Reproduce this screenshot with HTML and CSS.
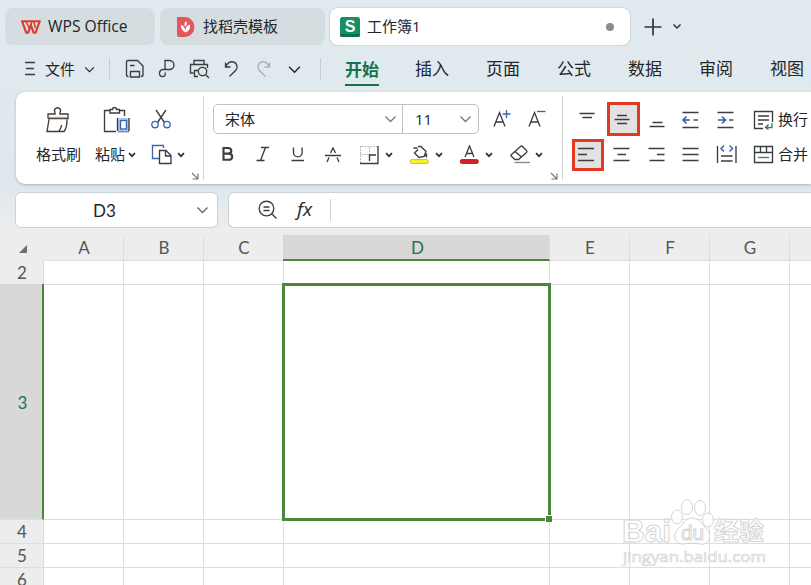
FILE: index.html
```html
<!DOCTYPE html>
<html lang="zh-CN">
<head>
<meta charset="utf-8">
<title>工作簿1</title>
<link rel="stylesheet" href="styles.css">
</head>
<body>
<svg width="0" height="0" class="defs">
  <symbol id="caret" viewBox="0 0 8 6"><path d="M1 1.2 4 4.2 7 1.2" fill="none" stroke="#303030" stroke-width="1.7"/></symbol>
  <symbol id="chev" viewBox="0 0 12 8"><path d="M1 1.5 6 6.5 11 1.5" fill="none" stroke="currentColor" stroke-width="1.3"/></symbol>
  <symbol id="launch" viewBox="0 0 8 8"><path d="M1 1 6.5 6.500M7 1.500V7H1.500" fill="none" stroke="#777" stroke-width="1.200"/></symbol>
</svg>

<header class="tabs">
  <div class="tab home">
    <svg width="20" height="14" viewBox="0 0 20 14"><path d="M1 1.200H18.800L14.600 12.600H12.600L9.800 4.800 7.200 12.600H5.200Z" fill="none" stroke="#dc3b2c" stroke-width="2.100" stroke-linejoin="round"/><path d="M5.200 1.500 8.300 8.500M9.800 4.800 11 1.500M12.700 1.500 14.500 8" stroke="#dc3b2c" stroke-width="1.500"/></svg>
    <span>WPS Office</span>
  </div>
  <div class="tab docer">
    <svg width="19" height="20" viewBox="0 0 19 20"><path d="M1 0H9A9.500 10 0 0 1 9 20H3Q1 20 1 18Z" fill="#e2575b"/><path d="M9.500 15.500C6 13.500 5 11 4.800 8 7.500 8.500 9 10.500 9.500 15.500M9.500 15.500C9 12 10 9 14 7.500 14.500 11.500 13 14 9.500 15.500M9 9.500C8 7.500 8.500 5.500 10 4 11 5.500 11.200 7 10.500 8.500Z" fill="#fff"/></svg>
    <span>找稻壳模板</span>
  </div>
  <div class="tab active">
    <svg width="20" height="20" viewBox="0 0 20 20"><rect width="20" height="20" rx="2.500" fill="#159063"/><path d="M0 17H20V18a2 2 0 0 1-2 2H2a2 2 0 0 1-2-2Z" fill="#0b704b"/></svg>
    <b class="s">S</b>
    <span>工作簿1</span>
    <i class="dot"></i>
  </div>
  <svg class="plus" width="18" height="18" viewBox="0 0 18 18"><path d="M9 .5V17.500M.5 9H17.500" stroke="#303438" stroke-width="1.700"/></svg>
  <svg class="more" width="10" height="7" viewBox="0 0 10 7"><path d="M1.500 1.500 5 5 8.500 1.500" fill="none" stroke="#303438" stroke-width="1.500"/></svg>
</header>

<nav class="menu">
  <svg width="12" height="16" viewBox="0 0 12 16" class="ln up"><path d="M1 1.500H11M2 7.500H10M1 13.500H11"/></svg>
  <span class="file">文件</span>
  <svg width="11" height="7"><use href="#chev"/></svg>
  <i class="bar"></i>
  <svg width="20" height="20" viewBox="0 0 20 20" class="ln"><path d="M3.500 17.500H3Q1.500 17.500 1.500 16V3Q1.500 1.500 3 1.500H12.500L18 7V16Q18 17.500 16 17.500M5.500 18V12.500H14.500V18ZM5 6.500H9.500"/></svg>
  <svg width="18" height="20" viewBox="0 0 18 20" class="ln"><path d="M7 10.500V1.500H11.500A4.500 4.500 0 0 1 11.500 10.500H5Q1.500 11 1.500 14.300T4.500 17.500 7.300 14.500V13.500"/></svg>
  <svg width="21" height="20" viewBox="0 0 21 20" class="ln"><path d="M5 5V1.500H15V5M4.500 14H1.500V5.500H18.500V9M9 17.500H5.500V11.500H9M16.500 15.500 20 19"/><circle cx="13.500" cy="12.500" r="4.200"/></svg>
  <svg width="15" height="18" viewBox="0 0 15 18" class="ln"><path d="M1.500 2.500V7H6.500M1.500 7C3.500 2.800 6.500 1.200 9.500 2 13 3 14 7 12 10L5.500 16.500"/></svg>
  <svg width="15" height="18" viewBox="0 0 15 18" class="ln pale"><path d="M13.500 2.500V7H8.500M13.500 7C11.500 2.800 8.500 1.200 5.500 2 2 3 1 7 3 10L9.500 16.500"/></svg>
  <svg width="13" height="9"><use href="#chev"/></svg>
  <i class="bar"></i>
  <b class="on">开始</b><span>插入</span><span>页面</span><span>公式</span><span>数据</span><span>审阅</span><span>视图</span>
</nav>

<section class="ribbon">
  <div class="group clip">
    <div class="big">
      <svg width="26" height="28" viewBox="0 0 26 28" class="ln"><path d="M3 12.500V8H10V6.500A3 3 0 1 1 15 6.500V8H23V12.500H3M4 13.500 2 25.500H19Q22 22 22 13.500M16.500 19Q16.500 22 14 25"/><path d="M4 11.500H22" stroke="#e49a5b"/></svg>
      <span>格式刷</span>
    </div>
    <div class="big paste">
      <svg width="28" height="28" viewBox="0 0 28 28" class="ln"><path d="M7 4.500H1.500V25.500H13M16 4.500H21.500V10M7 7V3.500H9.500Q9.500 1.500 11.500 1.500T13.500 3.500H16.500V7ZM15 25.500H26"/><rect x="14.500" y="12" width="11.500" height="13.500" fill="#b5cdf2" stroke="none"/><path d="M14.500 12V25M26 12V25"/><rect x="17.500" y="14.500" width="6" height="8.500" fill="#fff" stroke="#3864b4"/></svg>
      <span>粘贴 <svg width="8" height="6"><use href="#caret"/></svg></span>
    </div>
    <div class="small">
      <svg width="22" height="20" viewBox="0 0 22 20" class="ln"><path d="M6 1 14.500 13.500M16 1 7.500 13.500"/><circle cx="5" cy="15.500" r="3.200" stroke="#3c68ad"/><circle cx="17" cy="15.500" r="3.200" stroke="#3c68ad"/></svg>
      <div class="pair"><svg width="22" height="21" viewBox="0 0 22 21" class="ln"><path d="M8 14.500H1.500V1.500H12.500V4" stroke="#3c68ad"/><path d="M8.500 6.500H15L20 11.500V19.500H8.500ZM14.500 6.500V12H20" fill="#fff"/></svg><svg width="8" height="6"><use href="#caret"/></svg></div>
    </div>
    <svg class="corner" width="8" height="8"><use href="#launch"/></svg>
  </div>

  <div class="group font">
    <div class="row1">
      <div class="combo"><span class="name">宋体<svg width="13" height="8"><use href="#chev"/></svg></span><span class="size">11<svg width="13" height="8"><use href="#chev"/></svg></span></div>
      <svg width="20" height="20" viewBox="0 0 20 20" class="ln"><path d="M1 17.500 6.500 3.500 12 17.500M3 13H10"/><path d="M9.500 5H17.500M13.500 1V9" stroke="#3864a8"/></svg>
      <svg width="20" height="20" viewBox="0 0 20 20" class="ln"><path d="M1 17.500 6.500 3.500 12 17.500M3 13H10"/><path d="M9 2.500H17.500" stroke="#3864a8"/></svg>
    </div>
    <div class="row2">
      <svg width="14" height="16" viewBox="0 0 14 16" class="ln bold"><path d="M2.500 1H7Q10.300 1 10.300 3.800T7 6.600H2.500ZM2.500 6.600H7.500Q11.200 6.600 11.200 9.700T7.500 12.800H2.500Z"/></svg>
      <svg width="15" height="16" viewBox="0 0 15 16" class="ln"><path d="M5 .5H13M.5 13.500H8.500M9.500 .5 4.500 13.500"/></svg>
      <svg width="14" height="16" viewBox="0 0 14 16" class="ln"><path d="M2.500 .5V5.500A4.300 4.300 0 0 0 11.100 5.500V.5M.5 13.500H13"/></svg>
      <svg width="18" height="17" viewBox="0 0 18 17" class="ln"><path d="M5.500 6 8 1 10.500 6M0 8.500H16M4 10.500 2 15M12 10.500 14 15"/></svg>
      <svg width="20" height="20" viewBox="0 0 20 20" class="ln"><path d="M1 1.500H18M.5 1V18M9.500 2V9M1 9.500H9" stroke="#bbb" stroke-width="1" stroke-dasharray="2 1"/><path d="M18 1V18.500H0M9.500 16V10H16"/></svg>
      <svg width="8" height="6"><use href="#caret"/></svg>
      <svg width="20" height="21" viewBox="0 0 20 21" class="ln"><path d="M3.500 3H7.500M8 1.500H11L16 6.500 14 11.500 9 12.500 4.500 8 8 4.500 5 7.500M14 11.500 16.500 9.500V12.500"/><rect x=".3" y="14.500" width="18" height="4" rx="1.500" fill="#f5f328" stroke="#bcb835" stroke-width=".8"/></svg>
      <svg width="8" height="6"><use href="#caret"/></svg>
      <svg width="20" height="21" viewBox="0 0 20 21" class="ln"><path d="M5 12 9.500 1 14 12M6.500 8.500H12.500"/><rect x=".3" y="14.500" width="18" height="4" rx="1.500" fill="#d51f28" stroke="#ae1821" stroke-width=".8"/></svg>
      <svg width="8" height="6"><use href="#caret"/></svg>
      <svg width="21" height="20" viewBox="0 0 21 20" class="ln"><path d="M1 10 10.500 1.500Q11.500 .5 12.500 1.500L16.500 5.500Q17.500 6.500 16.500 7.500L8.500 14.500H5L1 11ZM5 6.500 11.500 12"/><path d="M4.500 17.500H20" stroke="#888"/></svg>
      <svg width="8" height="6"><use href="#caret"/></svg>
    </div>
    <svg class="corner" width="8" height="8"><use href="#launch"/></svg>
  </div>

  <div class="group align">
    <svg width="32" height="32" viewBox="0 0 32 32" class="ln"><path d="M8.500 9.500H23.500M11.500 13.500H21"/></svg>
    <span class="hot tall"><svg width="26" height="26" viewBox="0 0 26 26" class="ln"><path d="M7 10.500H17M4.500 14.500H19.500M7 18.500H17"/></svg></span>
    <svg width="32" height="32" viewBox="0 0 32 32" class="ln"><path d="M11.500 18.500H21.500M8.500 22.500H23.500"/></svg>
    <svg width="32" height="32" viewBox="0 0 32 32" class="ln"><path d="M7.500 8.500H23.500M7.500 23.500H23.500"/><path d="M8 16H15M11.500 12.500 8 16 11.500 19.500" stroke="#3456b4" stroke-width="1.500"/><path d="M18.500 16H23"/></svg>
    <svg width="32" height="32" viewBox="0 0 32 32" class="ln"><path d="M7.500 8.500H23.500M7.500 23.500H23.500"/><path d="M8 16H15.500M12 12.500 15.500 16 12 19.500" stroke="#3456b4" stroke-width="1.500"/><path d="M19 16H23.500"/></svg>
    <div class="labeled"><svg width="21" height="20" viewBox="0 0 21 20" class="ln"><path d="M10 18.500H1.500V1.500H19.500V12M5 6H16M5 10H16M5 14H10"/><path d="M19 13V17.500H13M15.500 14.500 12.500 17.500 15.500 19.500" stroke="#36835b"/></svg><span>换行</span></div>

    <span class="hot"><svg width="25" height="26" viewBox="0 0 25 26" class="ln"><path d="M3 6.500H19M3 12.500H12M3 18.500H19"/></svg></span>
    <svg width="32" height="32" viewBox="0 0 32 32" class="ln"><path d="M7.500 9.500H23.500M11.500 15.500H20M7.500 21.500H23.500"/></svg>
    <svg width="32" height="32" viewBox="0 0 32 32" class="ln"><path d="M7.500 9.500H23.500M16 15.500H23.500M8.500 21.500H23.500"/></svg>
    <svg width="32" height="32" viewBox="0 0 32 32" class="ln"><path d="M7.500 9.500H23.500M7.500 15.500H23.500M7.500 21.500H23.500"/></svg>
    <svg width="32" height="32" viewBox="0 0 32 32" class="ln"><path d="M7.500 7V24M26 7V24M11 17H22.500M11 22H22.500"/><path d="M14 6.500 11 9.500 14 12.500M19.500 6.500 22.500 9.500 19.500 12.500" stroke="#3456b4" stroke-width="1.400"/></svg>
    <div class="labeled"><svg width="21" height="20" viewBox="0 0 21 20" class="ln"><path d="M1.500 1.500H19.500V17.500H1.500ZM1.500 7.500H19.500M7.500 1.500V7.500M13.500 1.500V7.500"/><path d="M5 12.500H16" stroke="#36835b"/></svg><span>合并</span></div>
  </div>
</section>

<section class="formula">
  <div class="namebox"><span>D3</span><svg width="13" height="8"><use href="#chev"/></svg></div>
  <div class="input">
    <svg width="20" height="20" viewBox="0 0 20 20" class="ln"><circle cx="8.500" cy="8.500" r="7.300"/><path d="M13.500 13.500 18.500 18.500M5.500 7H11.500M5.500 10.500H11.500"/></svg>
    <span class="fx">fx</span>
    <i class="bar"></i>
  </div>
</section>

<main class="sheet">
  <div class="corner-cell"><svg width="8" height="8"><path d="M8 0V8H0Z" fill="#6f6f6f"/></svg></div>
  <div class="ch">A</div><div class="ch">B</div><div class="ch">C</div><div class="ch sel">D</div><div class="ch">E</div><div class="ch">F</div><div class="ch">G</div><div class="ch"></div>
  <div class="rh">2</div><i></i><i></i><i></i><i></i><i></i><i></i><i></i><i></i>
  <div class="rh sel">3</div><i></i><i></i><i></i><i class="cur"></i><i></i><i></i><i></i><i></i>
  <div class="rh">4</div><i></i><i></i><i></i><i></i><i></i><i></i><i></i><i></i>
  <div class="rh">5</div><i></i><i></i><i></i><i></i><i></i><i></i><i></i><i></i>
  <div class="rh">6</div><i></i><i></i><i></i><i></i><i></i><i></i><i></i><i></i>
  <svg class="mark" width="152" height="74" viewBox="0 0 152 74">
    <g fill="#fff" stroke="#cfcfcf" stroke-width="1">
      <text x="2" y="44" font-size="31" textLength="49" lengthAdjust="spacingAndGlyphs" font-weight="700" font-family="Liberation Sans">Bai</text>
      <ellipse cx="57" cy="19" rx="5.500" ry="7"/><ellipse cx="67" cy="9" rx="5.500" ry="7.500"/><ellipse cx="80" cy="10" rx="5.500" ry="7.500"/><ellipse cx="88" cy="22" rx="5.500" ry="7"/>
      <path d="M72 20C80 20 82 27 87 31 93 38 88 48 80 46 75 45 69 45 64 46 56 47 52 39 57 32 62 28 65 20 72 20Z"/>
      <text x="61" y="42" font-size="20" textLength="23" lengthAdjust="spacingAndGlyphs" font-family="Liberation Sans">du</text>
      <text x="94" y="42" font-size="25" textLength="50" lengthAdjust="spacingAndGlyphs" font-weight="700">经验</text>
      <text x="3" y="64" font-size="15" stroke-width=".7" textLength="143" lengthAdjust="spacingAndGlyphs">jingyan.baidu.com</text>
    </g>
  </svg>
</main>
</body>
</html>
```
FILE: styles.css
```css
* { box-sizing: border-box; }
body {
  margin: 0;
  width: 811px;
  height: 585px;
  overflow: hidden;
  display: flex;
  flex-direction: column;
  background: linear-gradient(#e1eaef 0, #e0e8ed 188px, #ededee 232px);
  color: #222629;
  font: 15px/1 "Open Sans", "Noto Sans CJK SC", sans-serif;
}
svg { display: block; flex: none; overflow: visible; }
.defs { position: absolute; }
.ln { fill: none; stroke: #3b3d40; stroke-width: 1.35; }
.bold { stroke-width: 2.1; }
.pale { stroke: #aab1b6; }
.up { margin-bottom: 1px; }
span { white-space: nowrap; }

.tabs { display: flex; flex: none; height: 50px; padding: 8px 0 0 5px; align-items: flex-start; }
.tab { height: 37px; border-radius: 8px; background: #d5dde0; display: flex; align-items: center; }
.home { width: 150px; padding-left: 16px; gap: 7px; margin-right: 5px; font-size: 15.700px; }
.docer { width: 165px; padding-left: 16px; gap: 8px; margin-right: 5px; }
.active { width: 300px; padding: 0 16px 0 10px; background: #fff; box-shadow: 0 0 2px #a9b0b4; position: relative; gap: 7px; }
.s { position: absolute; left: 10px; width: 20px; text-align: center; color: #fff; font: 700 16px/17px "Liberation Sans", sans-serif; }
.dot { width: 8px; height: 8px; border-radius: 50%; background: #8d8d8d; margin-left: auto; }
.plus { margin: 10px 0 0 14px; }
.more { margin: 15px 0 0 10px; }

.menu {
  display: grid;
  flex: none;
  height: 42px;
  padding: 0 0 4px 24px;
  grid-template-columns: 21px 39px 25px 16px 33px 31px 35px 32px 32px 32px 24px 71px repeat(5, 71px) 40px;
  align-items: center;
}
.menu span, .menu .on { font-size: 17px; line-height: 36px; font-weight: 400; }
.menu .file { font-size: 15px; }
.bar { width: 1px; height: 22px; background: #c6cdd1; }
.menu .on { color: #14724d; font-weight: 700; width: 34px; height: 34px; line-height: 35px; border-bottom: 2px solid #14724d; margin-left: 1px; }

.ribbon {
  display: flex;
  flex: none;
  height: 92px;
  margin-left: 16px;
  background: #fff;
  border-radius: 9px 0 0 9px;
  box-shadow: 0 1px 3px #a9b3b8;
  padding: 4px 0;
}
.group { position: relative; height: 84px; flex: none; border-right: 1px solid #d2d4d5; }
.corner { position: absolute; right: 4px; bottom: 0; }
.clip { width: 188px; display: flex; padding: 10px 0 0 20px; }
.big { width: 59px; display: flex; flex-direction: column; gap: 13px; }
.big > svg { margin-left: 9px; }
.paste > svg { margin-left: 8px; }
.big span { display: flex; align-items: center; gap: 3px; font-size: 15px; }
.small { margin-left: -4px; display: flex; flex-direction: column; gap: 15px; padding-top: 3px; }
.small .pair { display: flex; align-items: center; gap: 4px; padding-left: 1px; }

.font { width: 359px; padding: 8px 0 0 9px; }
.row1 { display: flex; align-items: center; }
.combo { width: 266px; height: 30px; border: 1px solid #bfc1c2; border-radius: 5px; display: flex; margin-right: 14px; }
.combo span { display: flex; align-items: center; justify-content: space-between; padding: 0 5px 0 11px; }
.combo svg { color: #777; }
.combo .name { width: 189px; border-right: 1px solid #bfc1c2; }
.combo .size { flex: 1; padding: 0 6px 0 12px; }
.row1 > svg + svg { margin-left: 15px; }
.row2 { display: grid; grid-template-columns: 35px 35px 34px 35px 25px 25px 25px 25px 25px 25px 25px 10px; align-items: center; height: 22px; margin: 10px 0 0 8px; }

.align { width: 248px; border: 0; padding: 6px 0 0 8px; display: grid; grid-template-columns: 35px 35px 34px 35px 36px 65px; grid-template-rows: 35px 35px; align-items: center; }
.hot { width: 32px; height: 32px; border: 3px solid #e23a20; background: #e2e2e3; justify-self: start; margin-left: 1px; }
.hot.tall { height: 34px; width: 33px; margin: -1px 0 0 1px; }
.labeled { display: flex; align-items: center; gap: 4px; margin-left: 7px; }

.formula { display: flex; flex: none; gap: 10px; height: 36px; margin: 8px 0 7px 15px; }
.namebox { width: 203px; background: #fff; border: 1px solid #cdd1d3; border-radius: 6px; display: flex; align-items: center; justify-content: space-between; padding: 0 8px 0 77px; font: 17px/1 Lato, sans-serif; }
.namebox svg { color: #666; }
.input { flex: 1; background: #fff; border: 1px solid #cdd1d3; border-right: 0; border-radius: 6px 0 0 6px; display: flex; align-items: center; padding-left: 29px; }
.fx { font: italic 19px/1 "Open Sans", sans-serif; margin: -2px 15px 0 19px; width: 18px; }
.fx + .bar { background: #d0d0d0; }

.sheet {
  position: relative;
  flex: none;
  display: grid;
  grid-template-columns: 44px 80px 80px 80px 266px 80px 80px 80px 21px;
  grid-template-rows: 26px 24px 235px 24px 24px 24px;
  color: #555;
  font: 17px/1 Lato, sans-serif;
}
.sheet > * { border-right: 1px solid #dedede; border-bottom: 1px solid #dedede; }
.sheet > :nth-child(9n) { border-right: 0; }
.sheet > i { background: #fff; }
.ch, .rh, .corner-cell { display: flex; align-items: center; justify-content: center; background: #ededee; padding-left: 1px; }
.sheet > .corner-cell { border: 0; padding-top: 2px; }
.ch.sel { background: #d8d8d8; color: #217252; border-bottom: 2px solid #4d873b; margin-left: -1px; padding-left: 3px; }
.sheet > .rh.sel { background: #d8d8d8; color: #217252; border-right: 2px solid #4d873b; margin-top: -1px; padding: 2px 0 0 3px; }
.sheet > .cur { position: relative; border: 3px solid #4d873b; margin: -2px -1px -1px -2px; }
.cur::after { content: ""; position: absolute; right: -4px; bottom: -4px; width: 6px; height: 6px; background: #4d873b; border: 1px solid #fff; border-right: 0; border-bottom: 0; }
.sheet > .mark { position: absolute; left: 620px; top: 263px; border: 0; font-family: "Open Sans", "Noto Sans CJK SC", sans-serif; opacity: .85; }
```
